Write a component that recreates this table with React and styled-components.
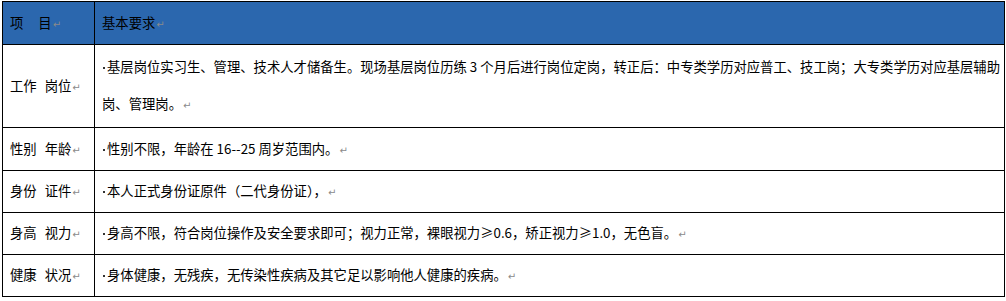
import React from 'react';
import styled, { createGlobalStyle } from 'styled-components';

const Global = createGlobalStyle`
  html, body {
    margin: 0;
    padding: 0;
    background: #fff;
  }
`

const Page = styled.div`
  padding: 1px 0 0 2px;
  width: 1006px;
  height: 301px;
  box-sizing: border-box;
  font-family: "Noto Sans CJK SC", "Noto Sans", sans-serif;
  color: #000;
`

const Table = styled.table`
  border-collapse: collapse;
  table-layout: fixed;
  width: 1002px;
  font-size: 13.33px;
`

const Row = styled.tr`
  height: ${p => p.h}px;
  background: ${p => p.head ? '#2b67ae' : '#fff'};
`

const Cell = styled.td`
  border: 1px solid #000;
  padding: 0 0 0 7px;
  vertical-align: middle;
  line-height: 37px;
  white-space: nowrap;
`

const Gap = styled.span`
  display: inline-block;
  width: ${p => p.w}px;
`

const Text = styled.div`
  white-space: normal;
  width: 901px;
`

const Bullet = styled.span`
  display: inline-block;
  width: 2px;
  height: 2px;
  margin: 0 2px 0 1px;
  background: #333;
  vertical-align: middle;
`

const Mark = styled.span`
  color: #8a8a8a;
  font-size: 10px;
  margin-left: 1px;
  font-family: "DejaVu Sans", sans-serif;
`

const rows = [
  { label: ['工作', '岗位'], h: 83, text: '基层岗位实习生、管理、技术人才储备生。现场基层岗位历练 3 个月后进行岗位定岗，转正后：中专类学历对应普工、技工岗；大专类学历对应基层辅助岗、管理岗。' },
  { label: ['性别', '年龄'], h: 43, text: '性别不限，年龄在 16--25 周岁范围内。' },
  { label: ['身份', '证件'], h: 42, text: '本人正式身份证原件（二代身份证），' },
  { label: ['身高', '视力'], h: 42, text: '身高不限，符合岗位操作及安全要求即可；视力正常，裸眼视力≥0.6，矫正视力≥1.0，无色盲。' },
  { label: ['健康', '状况'], h: 42, text: '身体健康，无残疾，无传染性疾病及其它足以影响他人健康的疾病。' },
];

export default () => (
  <Page>
    <Global />
    <Table>
      <colgroup>
        <col style={{ width: 92 }} />
        <col style={{ width: 910 }} />
      </colgroup>
      <tbody>
        <Row head h={43}>
          <Cell>项<Gap w={15} />目<Mark>↵</Mark></Cell>
          <Cell>基本要求<Mark>↵</Mark></Cell>
        </Row>
        {rows.map(r => (
          <Row key={r.label[0]} h={r.h}>
            <Cell>{r.label[0]}<Gap w={8} />{r.label[1]}<Mark>↵</Mark></Cell>
            <Cell>
              <Text><Bullet />{r.text}<Mark>↵</Mark></Text>
            </Cell>
          </Row>
        ))}
      </tbody>
    </Table>
  </Page>
);
